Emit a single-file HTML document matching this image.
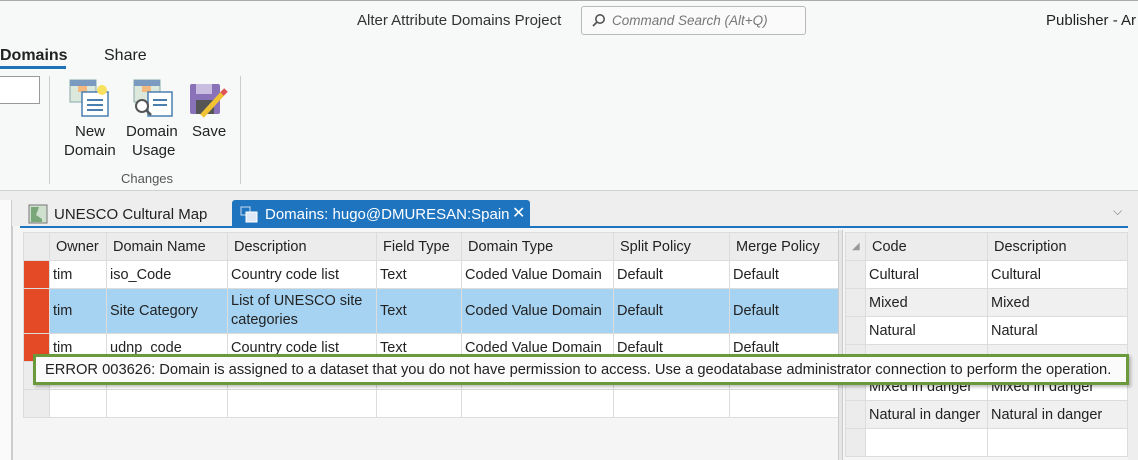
<!DOCTYPE html>
<html><head><meta charset="utf-8"><style>
*{box-sizing:border-box;margin:0;padding:0}
body{width:1138px;height:460px;overflow:hidden;background:#f7f8f8;font-family:"Liberation Sans",sans-serif;color:#222;position:relative}
.a{position:absolute}
.t{font-size:15px}
table{border-collapse:collapse;position:absolute;table-layout:fixed}
td{border:1px solid #dcdcdc;font-size:14.5px;padding:0 3px;white-space:nowrap;overflow:hidden;height:28px}
th{font-weight:normal;font-size:14.5px;text-align:left;padding:0 6px;border:1px solid #dcdcdc;background:#ececec;height:28px}
</style></head><body>
<div class="a" style="left:0;top:0;width:1138px;height:1px;background:#aaa"></div>
<div class="a t" style="left:357px;top:12px;color:#333">Alter Attribute Domains Project</div>
<div class="a" style="left:581px;top:6px;width:225px;height:29px;border:1px solid #b8b8b8;border-radius:3px;background:#fafafa"></div>
<svg class="a" style="left:592px;top:13px" width="14" height="14"><circle cx="8" cy="6" r="4.2" fill="none" stroke="#555" stroke-width="1.6"/><line x1="5" y1="9" x2="1" y2="13" stroke="#555" stroke-width="1.8"/></svg>
<div class="a" style="left:612px;top:13px;font-size:13.5px;font-style:italic;color:#777">Command Search (Alt+Q)</div>
<div class="a t" style="left:1046px;top:12px;color:#222">Publisher - Ar</div>
<div class="a t" style="left:0;top:47px;font-size:16px;font-weight:bold;color:#222">Domains</div>
<div class="a" style="left:0;top:66px;width:66px;height:3px;background:#1e72b8"></div>
<div class="a t" style="left:104px;top:47px;font-size:16px">Share</div>
<div class="a" style="left:0;top:76px;width:40px;height:28px;border:1px solid #999;border-left:none;background:#fff"></div>
<div class="a" style="left:49px;top:76px;width:1px;height:108px;background:#ccc"></div>
<div class="a" style="left:240px;top:76px;width:1px;height:108px;background:#ccc"></div>
<svg class="a" style="left:68px;top:78px" width="44" height="40"><rect x="2" y="2" width="26" height="22" fill="#dde8dd" stroke="#8aa"/><rect x="2" y="2" width="26" height="6" fill="#7a9ac0"/><rect x="10" y="8" width="9" height="6" fill="#f3b97e"/><rect x="14" y="14" width="26" height="24" fill="#fff" stroke="#4a7fb0" stroke-width="1.5"/><line x1="19" y1="22" x2="35" y2="22" stroke="#4a7fb0" stroke-width="2"/><line x1="19" y1="27" x2="35" y2="27" stroke="#4a7fb0" stroke-width="2"/><line x1="19" y1="32" x2="35" y2="32" stroke="#4a7fb0" stroke-width="2"/><circle cx="34" cy="12" r="5" fill="#f8e060"/></svg>
<svg class="a" style="left:132px;top:78px" width="44" height="40"><rect x="2" y="2" width="26" height="22" fill="#dde8dd" stroke="#8aa"/><rect x="2" y="2" width="26" height="6" fill="#7a9ac0"/><rect x="10" y="8" width="9" height="6" fill="#f3b97e"/><rect x="16" y="14" width="24" height="24" fill="#fff" stroke="#4a7fb0" stroke-width="1.5"/><line x1="21" y1="22" x2="35" y2="22" stroke="#4a7fb0" stroke-width="2"/><line x1="21" y1="27" x2="35" y2="27" stroke="#4a7fb0" stroke-width="2"/><circle cx="10" cy="28" r="6" fill="#fff" stroke="#555" stroke-width="2"/><line x1="14" y1="32" x2="19" y2="37" stroke="#555" stroke-width="2.5"/></svg>
<svg class="a" style="left:190px;top:82px" width="40" height="36"><rect x="0" y="2" width="30" height="30" rx="2" fill="#8a72b8"/><rect x="6" y="2" width="16" height="10" fill="#c9bde0"/><rect x="6" y="18" width="18" height="14" fill="#555"/><line x1="12" y1="34" x2="34" y2="10" stroke="#f1c232" stroke-width="5"/><line x1="32" y1="12" x2="36" y2="8" stroke="#d55" stroke-width="5"/></svg>
<div class="a t" style="left:75px;top:123px">New</div>
<div class="a t" style="left:64px;top:142px">Domain</div>
<div class="a t" style="left:126px;top:123px">Domain</div>
<div class="a t" style="left:132px;top:142px">Usage</div>
<div class="a t" style="left:192px;top:123px">Save</div>
<div class="a" style="left:121px;top:171px;font-size:13px;color:#555">Changes</div>
<div class="a" style="left:0;top:190px;width:1138px;height:270px;background:#eeeeee;border-top:1px solid #d0d0d0"></div>
<div class="a" style="left:0;top:200px;width:12px;height:260px;background:#fafafa;border-right:1px solid #ccc"></div>
<div class="a" style="left:12px;top:226px;width:1116px;height:234px;background:#f5f5f5;border-left:1px solid #ccc"></div>
<svg class="a" style="left:28px;top:204px" width="20" height="20"><rect x="1" y="1" width="18" height="18" fill="#cfe0cf" stroke="#777"/><path d="M3 3h8l-3 8 6 4v3H3z" fill="#7aa77a"/></svg>
<div class="a t" style="left:54px;top:206px">UNESCO Cultural Map</div>
<div class="a" style="left:232px;top:200px;width:298px;height:27px;background:#1f74c0;border-radius:3px 3px 0 0"></div>
<svg class="a" style="left:240px;top:206px" width="18" height="17"><rect x="1" y="1" width="9" height="8" fill="none" stroke="#cde"/><rect x="6" y="6" width="11" height="10" fill="#dfe9f5" stroke="#fff"/></svg>
<div class="a t" style="left:265px;top:206px;color:#fff">Domains: hugo@DMURESAN:Spain</div>
<div class="a" style="left:512px;top:203px;color:#fff;font-size:16px">✕</div>
<div class="a" style="left:1113px;top:204px;color:#777;font-size:12px">⌵</div>
<div class="a" style="left:20px;top:226px;width:1108px;height:2px;background:#1f74c0"></div>
<table style="left:23px;top:232px;width:817px">
<colgroup><col style="width:26px"><col style="width:57px"><col style="width:121px"><col style="width:149px"><col style="width:85px"><col style="width:152px"><col style="width:116px"><col style="width:111px"></colgroup>
<tr><th></th><th>Owner</th><th>Domain Name</th><th>Description</th><th>Field Type</th><th>Domain Type</th><th>Split Policy</th><th>Merge Policy</th></tr>
<tr style="background:#fff"><td style="background:#e34a25"></td><td>tim</td><td>iso_Code</td><td>Country code list</td><td>Text</td><td>Coded Value Domain</td><td>Default</td><td>Default</td></tr>
<tr style="background:#a6d3f2"><td style="background:#e34a25;height:45px"></td><td>tim</td><td>Site Category</td><td style="white-space:normal;line-height:19px">List of UNESCO site categories</td><td>Text</td><td>Coded Value Domain</td><td>Default</td><td>Default</td></tr>
<tr style="background:#fff"><td style="background:#e34a25"></td><td>tim</td><td>udnp_code</td><td>Country code list</td><td>Text</td><td>Coded Value Domain</td><td>Default</td><td>Default</td></tr>
<tr style="background:#fff"><td style="background:#ececec"></td><td></td><td></td><td></td><td></td><td></td><td></td><td></td></tr>
<tr style="background:#fff"><td style="background:#ececec"></td><td></td><td></td><td></td><td></td><td></td><td></td><td></td></tr>
</table>
<div class="a" style="left:838px;top:230px;width:5px;height:230px;background:#e6e6e6;border-left:1px solid #ccc;border-right:1px solid #ccc"></div>
<table style="left:845px;top:232px;width:282px">
<colgroup><col style="width:20px"><col style="width:122px"><col style="width:140px"></colgroup>
<tr><th style="font-size:10px;color:#999">◢</th><th>Code</th><th>Description</th></tr>
<tr style="background:#fff"><td style="background:#ececec"></td><td>Cultural</td><td>Cultural</td></tr>
<tr style="background:#f0f0f0"><td style="background:#ececec"></td><td>Mixed</td><td>Mixed</td></tr>
<tr style="background:#fff"><td style="background:#ececec"></td><td>Natural</td><td>Natural</td></tr>
<tr style="background:#f0f0f0"><td style="background:#ececec"></td><td></td><td></td></tr>
<tr style="background:#fff"><td style="background:#ececec"></td><td>Mixed in danger</td><td>Mixed in danger</td></tr>
<tr style="background:#f0f0f0"><td style="background:#ececec"></td><td>Natural in danger</td><td>Natural in danger</td></tr>
<tr style="background:#fff"><td style="background:#ececec"></td><td></td><td></td></tr>
</table>
<div class="a" style="left:33px;top:354px;width:1096px;height:31px;background:#fbfbfb;border:3px solid #6a9a3c;box-shadow:2px 2px 3px rgba(0,0,0,.25);font-size:14.7px;padding:5px 0 0 9px;white-space:nowrap">ERROR 003626: Domain is assigned to a dataset that you do not have permission to access. Use a geodatabase administrator connection to perform the operation.</div>
</body></html>
